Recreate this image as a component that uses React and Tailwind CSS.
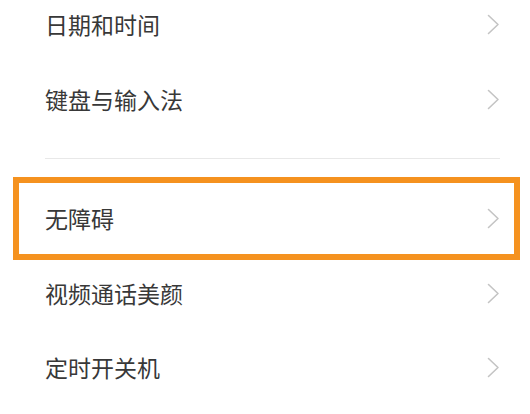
import React from 'react';

const Chevron = () => (
  <svg width="13" height="21" viewBox="0 0 13 21" fill="none" className="shrink-0">
    <path d="M1.5 1.5 L11 10.5 L1.5 19.5" stroke="#c4c4c4" strokeWidth="1.6" strokeLinecap="round" strokeLinejoin="round" />
  </svg>
);

const Row = ({ label, className }) => (
  <div className={`flex items-center justify-between pl-[45px] pr-[30px] ${className}`}>
    <span className="text-[23px] leading-none text-[#383838]">{label}</span>
    <Chevron />
  </div>
);

const App = () => {
  return (
    <div
      className="w-[530px] h-[414px] bg-white overflow-hidden flex flex-col"
      style={{ fontFamily: '"Noto Sans CJK SC", "Noto Sans", sans-serif' }}
    >
      <Row label="日期和时间" className="h-[49px]" />
      <Row label="键盘与输入法" className="h-[101px]" />
      <div className="mt-[8px] ml-[45px] mr-[30px] h-px bg-[#e8e8e8]" />
      <div className="mt-[18px] mr-[10px] ml-[13px] h-[83px] border-[6px] border-[#f5921f] flex items-center justify-between pl-[26px] pr-[14px]">
        <span className="text-[23px] leading-none text-[#383838]">无障碍</span>
        <Chevron />
      </div>
      <Row label="视频通话美颜" className="h-[67px]" />
      <Row label="定时开关机" className="h-[80px]" />
    </div>
  );
};

export default App;
